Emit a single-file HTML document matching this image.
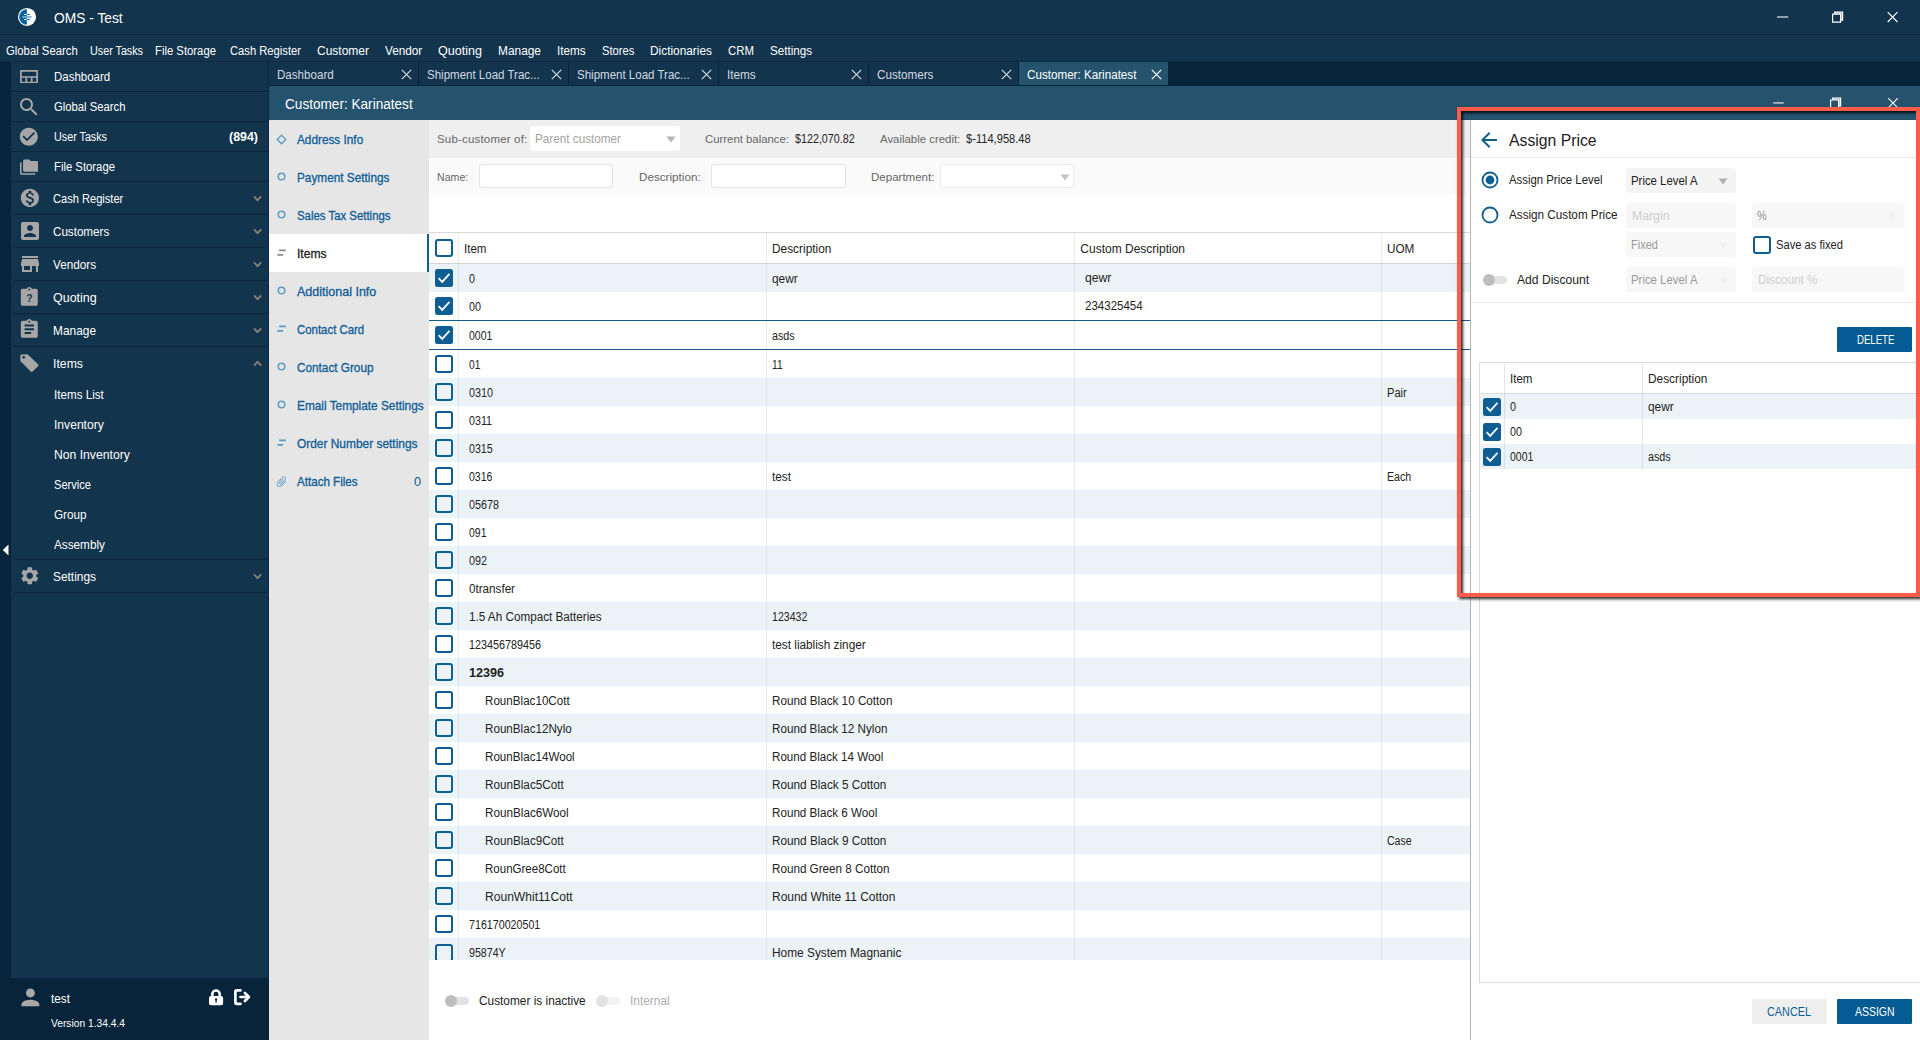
<!DOCTYPE html><html><head><meta charset="utf-8"><title>OMS - Test</title><style>html,body{margin:0;padding:0;background:#fff}
body{width:1920px;height:1040px;position:relative;overflow:hidden;font-family:'Liberation Sans',sans-serif}
.b{position:absolute;display:block}
.t{position:absolute;white-space:pre;line-height:20px;height:20px;transform-origin:0 50%}</style></head><body>
<div class="b" style="left:0px;top:0px;width:1920px;height:35px;background:#12344d;"></div>
<div class="b" style="left:0px;top:34px;width:1920px;height:1px;background:#0d2b43;"></div>
<div class="b" style="left:0px;top:35px;width:1920px;height:27px;background:#12344d;"></div>
<div class="b" style="left:0px;top:62px;width:11px;height:978px;background:#08243a;"></div>
<div class="b" style="left:11px;top:62px;width:257px;height:916px;background:#12344d;"></div>
<div class="b" style="left:0px;top:61px;width:1920px;height:1px;background:#0b2941;"></div>
<div class="b" style="left:268px;top:62px;width:1px;height:916px;background:#0b2941;"></div>
<div class="b" style="left:0px;top:978px;width:269px;height:62px;background:#08243a;"></div>
<div class="b" style="left:269px;top:62px;width:1651px;height:24px;background:#08243a;"></div>
<div class="b" style="left:269px;top:86px;width:1651px;height:34px;background:#25536e;"></div>
<div class="b" style="left:269px;top:120px;width:160px;height:920px;background:#e6e6e6;"></div>
<div class="b" style="left:429px;top:120px;width:1041px;height:920px;background:#fff;"></div>
<svg class="b" style="left:17px;top:7px" width="20" height="20" viewBox="0 0 20 20"><circle cx="10" cy="9.95" r="9.05" fill="#fff"/><path d="M9.9 2.2a7.75 7.75 0 0 0 0 15.5z" fill="#06639f"/><path d="M7 7.45h2.9M7 12.5h2.9" stroke="#fff" stroke-width="1.15"/><path d="M9.9 7.45h3M9.9 12.5h3" stroke="#0868a6" stroke-width="1.15"/><path d="M5.3 10h4.6" stroke="#a9c9e0" stroke-width="1.3"/><path d="M9.9 10h4.6" stroke="#4c8dbc" stroke-width="1.3"/></svg>
<span class="t" style="left:54.3px;top:8.0px;font-size:14.2px;color:#fff;transform:scaleX(0.9719);">OMS - Test</span>
<svg class="b" style="left:1770px;top:5px" width="140" height="26" viewBox="0 0 140 26"><path d="M7 12h11.2" stroke="#a7b2bd" stroke-width="1.7" fill="none"/><path d="M64.6 8.6V7.2h8v8h-1.6" fill="#9aa7b3" stroke="#fff" stroke-width="1.2"/><path d="M62.6 9.2h8v8h-8z" fill="#12344d" stroke="#fff" stroke-width="1.2"/><path d="M117.7 7.2l9.8 9.8M127.5 7.2l-9.8 9.8" stroke="#fff" stroke-width="1.1" fill="none"/></svg>
<span class="t" style="left:6px;top:40.5px;font-size:12.3px;color:#fff;transform:scaleX(0.9200);">Global Search</span>
<span class="t" style="left:90px;top:40.5px;font-size:12.3px;color:#fff;transform:scaleX(0.8747);">User Tasks</span>
<span class="t" style="left:155px;top:40.5px;font-size:12.3px;color:#fff;transform:scaleX(0.9199);">File Storage</span>
<span class="t" style="left:230px;top:40.5px;font-size:12.3px;color:#fff;transform:scaleX(0.9112);">Cash Register</span>
<span class="t" style="left:317px;top:40.5px;font-size:12.3px;color:#fff;transform:scaleX(0.9754);">Customer</span>
<span class="t" style="left:384.7px;top:40.5px;font-size:12.3px;color:#fff;transform:scaleX(0.9568);">Vendor</span>
<span class="t" style="left:437.7px;top:40.5px;font-size:12.3px;color:#fff;transform:scaleX(1.0214);">Quoting</span>
<span class="t" style="left:498px;top:40.5px;font-size:12.3px;color:#fff;transform:scaleX(0.9673);">Manage</span>
<span class="t" style="left:557px;top:40.5px;font-size:12.3px;color:#fff;transform:scaleX(0.9542);">Items</span>
<span class="t" style="left:601.7px;top:40.5px;font-size:12.3px;color:#fff;transform:scaleX(0.9087);">Stores</span>
<span class="t" style="left:650px;top:40.5px;font-size:12.3px;color:#fff;transform:scaleX(0.9650);">Dictionaries</span>
<span class="t" style="left:728px;top:40.5px;font-size:12.3px;color:#fff;transform:scaleX(0.9281);">CRM</span>
<span class="t" style="left:770px;top:40.5px;font-size:12.3px;color:#fff;transform:scaleX(0.9451);">Settings</span>
<div class="b" style="left:11px;top:90.8px;width:257px;height:1.4px;background:#0b2840;"></div>
<div class="b" style="left:11px;top:120.8px;width:257px;height:1.4px;background:#0b2840;"></div>
<div class="b" style="left:11px;top:150.8px;width:257px;height:1.4px;background:#0b2840;"></div>
<div class="b" style="left:11px;top:180.8px;width:257px;height:1.4px;background:#0b2840;"></div>
<div class="b" style="left:11.5px;top:209px;width:256.5px;height:6.3px;background:transparent;border-bottom:1.4px solid #0b2840;border-radius:0 0 4px 4px;box-sizing:border-box"></div>
<div class="b" style="left:11.5px;top:242px;width:256.5px;height:6.3px;background:transparent;border-bottom:1.4px solid #0b2840;border-radius:0 0 4px 4px;box-sizing:border-box"></div>
<div class="b" style="left:11.5px;top:275px;width:256.5px;height:6.3px;background:transparent;border-bottom:1.4px solid #0b2840;border-radius:0 0 4px 4px;box-sizing:border-box"></div>
<div class="b" style="left:11.5px;top:308px;width:256.5px;height:6.3px;background:transparent;border-bottom:1.4px solid #0b2840;border-radius:0 0 4px 4px;box-sizing:border-box"></div>
<div class="b" style="left:11.5px;top:341px;width:256.5px;height:6.3px;background:transparent;border-bottom:1.4px solid #0b2840;border-radius:0 0 4px 4px;box-sizing:border-box"></div>
<div class="b" style="left:11.5px;top:554px;width:256.5px;height:6.3px;background:transparent;border-bottom:1.4px solid #0b2840;border-radius:0 0 4px 4px;box-sizing:border-box"></div>
<div class="b" style="left:11.5px;top:587px;width:256.5px;height:6.3px;background:transparent;border-bottom:1.4px solid #0b2840;border-radius:0 0 4px 4px;box-sizing:border-box"></div>
<svg class="b" style="left:19.6px;top:69.8px" width="18" height="13.4" viewBox="0 0 18 13.4"><path d="M0.9 0.9h16.2v11.6H0.9zM0.9 7h16.2M6.3 7v5.5M11.7 7v5.5" fill="none" stroke="#a6a6a6" stroke-width="1.7"/></svg>
<span class="t" style="left:54.3px;top:66.5px;font-size:12.3px;color:#fff;transform:scaleX(0.9340);">Dashboard</span>
<svg class="b" style="left:17px;top:94.5px;" width="24" height="24" viewBox="0 0 24 24"><path d="M15.5 14h-.79l-.28-.27C15.41 12.59 16 11.11 16 9.5 16 5.91 13.09 3 9.5 3S3 5.91 3 9.5 5.91 16 9.5 16c1.61 0 3.09-.59 4.23-1.57l.27.28v.79l5 4.99L20.49 19l-4.99-5zm-6 0C7.01 14 5 11.99 5 9.5S7.01 5 9.5 5 14 7.01 14 9.5 11.99 14 9.5 14z" fill="#a6a6a6"/></svg>
<span class="t" style="left:54.3px;top:96.5px;font-size:12.3px;color:#fff;transform:scaleX(0.9174);">Global Search</span>
<svg class="b" style="left:17.9px;top:125.7px;" width="21.6" height="21.6" viewBox="0 0 24 24"><path d="M12 2C6.48 2 2 6.48 2 12s4.48 10 10 10 10-4.48 10-10S17.52 2 12 2zm-2 15l-5-5 1.41-1.41L10 14.17l7.59-7.59L19 8l-9 9z" fill="#a6a6a6"/></svg>
<span class="t" style="left:54.3px;top:126.5px;font-size:12.3px;color:#fff;transform:scaleX(0.8747);">User Tasks</span>
<span class="t" style="left:228.7px;top:126.5px;font-size:12.3px;color:#fff;font-weight:700;transform:scaleX(1.0098);">(894)</span>
<svg class="b" style="left:19.5px;top:158px;" width="18.4" height="18.4" viewBox="0 0 24 24"><path d="M2 6H0v5h.01L0 20c0 1.1.9 2 2 2h18v-2H2V6zm20-2h-8l-2-2H6c-1.1 0-1.99.9-1.99 2L4 16c0 1.1.9 2 2 2h16c1.1 0 2-.9 2-2V6c0-1.1-.9-2-2-2z" fill="#a6a6a6"/></svg>
<span class="t" style="left:54.3px;top:156.5px;font-size:12.3px;color:#fff;transform:scaleX(0.9199);">File Storage</span>
<svg class="b" style="left:18.6px;top:187.1px;" width="21.8" height="21.8" viewBox="0 0 24 24"><path d="M12 2C6.48 2 2 6.48 2 12s4.48 10 10 10 10-4.48 10-10S17.52 2 12 2zm1.41 16.09V20h-2.67v-1.93c-1.71-.36-3.16-1.46-3.27-3.4h1.96c.1 1.05.82 1.87 2.65 1.87 1.96 0 2.4-.98 2.4-1.59 0-.83-.44-1.61-2.67-2.14-2.48-.6-4.18-1.62-4.18-3.67 0-1.72 1.39-2.84 3.11-3.21V4h2.67v1.95c1.86.45 2.79 1.86 2.85 3.39H14.3c-.05-1.11-.64-1.87-2.22-1.87-1.5 0-2.4.68-2.4 1.64 0 .84.65 1.39 2.67 1.91s4.18 1.39 4.18 3.91c-.01 1.83-1.38 2.83-3.12 3.16z" fill="#a6a6a6"/></svg>
<span class="t" style="left:52.9px;top:188.5px;font-size:13px;color:#fff;transform:scaleX(0.8534);">Cash Register</span>
<svg class="b" style="left:253px;top:195.0px" width="9.2" height="7" viewBox="0 0 9.2 7"><path d="M1 1.4l3.6 3.7 3.6-3.7" fill="none" stroke="#85827c" stroke-width="1.9"/></svg>
<svg class="b" style="left:17.5px;top:219.0px;" width="24" height="24" viewBox="0 0 24 24"><path d="M3 5v14c0 1.1.89 2 2 2h14c1.1 0 2-.9 2-2V5c0-1.1-.9-2-2-2H5c-1.11 0-2 .9-2 2zm12 4c0 1.66-1.34 3-3 3s-3-1.34-3-3 1.34-3 3-3 3 1.34 3 3zm-9 8c0-2 4-3.1 6-3.1s6 1.1 6 3.1v1H6v-1z" fill="#a6a6a6"/></svg>
<span class="t" style="left:52.9px;top:221.5px;font-size:13px;color:#fff;transform:scaleX(0.8941);">Customers</span>
<svg class="b" style="left:253px;top:228.0px" width="9.2" height="7" viewBox="0 0 9.2 7"><path d="M1 1.4l3.6 3.7 3.6-3.7" fill="none" stroke="#85827c" stroke-width="1.9"/></svg>
<svg class="b" style="left:17.5px;top:252.0px;" width="24" height="24" viewBox="0 0 24 24"><path d="M20 4H4v2h16V4zm1 10v-2l-1-5H4l-1 5v2h1v6h10v-6h4v6h2v-6h1zm-9 4H6v-4h6v4z" fill="#a6a6a6"/></svg>
<span class="t" style="left:52.9px;top:254.5px;font-size:13px;color:#fff;transform:scaleX(0.9014);">Vendors</span>
<svg class="b" style="left:253px;top:261.0px" width="9.2" height="7" viewBox="0 0 9.2 7"><path d="M1 1.4l3.6 3.7 3.6-3.7" fill="none" stroke="#85827c" stroke-width="1.9"/></svg>
<svg class="b" style="left:18.2px;top:285.7px;" width="22.6" height="22.6" viewBox="0 0 24 24"><path d="M19 3h-4.18C14.4 1.84 13.3 1 12 1c-1.3 0-2.4.84-2.82 2H5c-1.1 0-2 .9-2 2v14c0 1.1.9 2 2 2h14c1.1 0 2-.9 2-2V5c0-1.1-.9-2-2-2zm-7 0c.55 0 1 .45 1 1s-.45 1-1 1-1-.45-1-1 .45-1 1-1z" fill="#a6a6a6"/><text x="12" y="17.5" text-anchor="middle" font-family="Liberation Sans, sans-serif" font-weight="700" font-size="11" fill="#12344d">?</text></svg>
<span class="t" style="left:52.9px;top:287.5px;font-size:13px;color:#fff;transform:scaleX(0.9595);">Quoting</span>
<svg class="b" style="left:253px;top:294.0px" width="9.2" height="7" viewBox="0 0 9.2 7"><path d="M1 1.4l3.6 3.7 3.6-3.7" fill="none" stroke="#85827c" stroke-width="1.9"/></svg>
<svg class="b" style="left:18.2px;top:318.09999999999997px;" width="22.6" height="22.6" viewBox="0 0 24 24"><path d="M19 3h-4.18C14.4 1.84 13.3 1 12 1c-1.3 0-2.4.84-2.82 2H5c-1.1 0-2 .9-2 2v14c0 1.1.9 2 2 2h14c1.1 0 2-.9 2-2V5c0-1.1-.9-2-2-2zm-7 0c.55 0 1 .45 1 1s-.45 1-1 1-1-.45-1-1 .45-1 1-1zm2 14H7v-2h7v2zm3-4H7v-2h10v2zm0-4H7V7h10v2z" fill="#a6a6a6"/></svg>
<span class="t" style="left:52.9px;top:320.5px;font-size:13px;color:#fff;transform:scaleX(0.9152);">Manage</span>
<svg class="b" style="left:253px;top:327.0px" width="9.2" height="7" viewBox="0 0 9.2 7"><path d="M1 1.4l3.6 3.7 3.6-3.7" fill="none" stroke="#85827c" stroke-width="1.9"/></svg>
<svg class="b" style="left:18px;top:352px" width="22" height="22" viewBox="0 0 22 22"><path d="M3.75 3.85L8.9 3.6 19.1 13.35 13.65 18.6 3.6 8.2z" fill="#a6a6a6" stroke="#a6a6a6" stroke-width="2.7" stroke-linejoin="round"/><circle cx="5.65" cy="5.3" r="1.3" fill="#12344d"/></svg>
<span class="t" style="left:52.9px;top:353.5px;font-size:13px;color:#fff;transform:scaleX(0.9435);">Items</span>
<svg class="b" style="left:253px;top:359.5px" width="9.2" height="7" viewBox="0 0 9.2 7"><path d="M1 5.6l3.6-3.7 3.6 3.7" fill="none" stroke="#85827c" stroke-width="1.9"/></svg>
<span class="t" style="left:54px;top:384.8px;font-size:12.3px;color:#fff;transform:scaleX(0.9463);">Items List</span>
<span class="t" style="left:54px;top:414.8px;font-size:12.3px;color:#fff;transform:scaleX(0.9843);">Inventory</span>
<span class="t" style="left:54px;top:444.8px;font-size:12.3px;color:#fff;transform:scaleX(0.9900);">Non Inventory</span>
<span class="t" style="left:54px;top:474.8px;font-size:12.3px;color:#fff;transform:scaleX(0.9021);">Service</span>
<span class="t" style="left:54px;top:504.79999999999995px;font-size:12.3px;color:#fff;transform:scaleX(0.9506);">Group</span>
<span class="t" style="left:54px;top:534.8px;font-size:12.3px;color:#fff;transform:scaleX(0.9547);">Assembly</span>
<svg class="b" style="left:18.7px;top:565.25px;" width="21.5" height="21.5" viewBox="0 0 24 24"><path d="M19.14 12.94c.04-.3.06-.61.06-.94 0-.32-.02-.64-.07-.94l2.03-1.58c.18-.14.23-.41.12-.61l-1.92-3.32c-.12-.22-.37-.29-.59-.22l-2.39.96c-.5-.38-1.03-.7-1.62-.94l-.36-2.54c-.04-.24-.24-.41-.48-.41h-3.84c-.24 0-.43.17-.47.41l-.36 2.54c-.59.24-1.13.57-1.62.94l-2.39-.96c-.22-.08-.47 0-.59.22L2.74 8.87c-.12.21-.08.47.12.61l2.03 1.58c-.05.3-.09.63-.09.94s.02.64.07.94l-2.03 1.58c-.18.14-.23.41-.12.61l1.92 3.32c.12.22.37.29.59.22l2.39-.96c.5.38 1.03.7 1.62.94l.36 2.54c.05.24.24.41.48.41h3.84c.24 0 .44-.17.47-.41l.36-2.54c.59-.24 1.13-.56 1.62-.94l2.39.96c.22.08.47 0 .59-.22l1.92-3.32c.12-.22.07-.47-.12-.61l-2.01-1.58zM12 15.6c-1.98 0-3.6-1.62-3.6-3.6s1.62-3.6 3.6-3.6 3.6 1.62 3.6 3.6-1.62 3.6-3.6 3.6z" fill="#a6a6a6"/></svg>
<span class="t" style="left:52.9px;top:566.5px;font-size:13px;color:#fff;transform:scaleX(0.9152);">Settings</span>
<svg class="b" style="left:253px;top:573.0px" width="9.2" height="7" viewBox="0 0 9.2 7"><path d="M1 1.4l3.6 3.7 3.6-3.7" fill="none" stroke="#85827c" stroke-width="1.9"/></svg>
<svg class="b" style="left:2px;top:544px" width="7" height="12" viewBox="0 0 7 12"><path d="M6.5 0.5v11L0.8 6z" fill="#fff"/></svg>
<svg class="b" style="left:16.7px;top:984.1px;" width="26.8" height="26.8" viewBox="0 0 24 24"><path d="M12 12c2.21 0 4-1.79 4-4s-1.79-4-4-4-4 1.79-4 4 1.79 4 4 4zm0 2c-2.67 0-8 1.34-8 4v2h16v-2c0-2.66-5.33-4-8-4z" fill="#a9a9a9"/></svg>
<span class="t" style="left:51px;top:988.5px;font-size:12.3px;color:#fff;transform:scaleX(0.9582);">test</span>
<svg class="b" style="left:206px;top:986px" width="20" height="22" viewBox="0 0 20 22"><rect x="3" y="10" width="14.1" height="9.2" rx="1.9" fill="#fff"/><path d="M6.3 10.5V8.2a3.7 3.7 0 0 1 7.4 0V10.5" fill="none" stroke="#fff" stroke-width="2.6"/><circle cx="10.05" cy="13.5" r="1.15" fill="#08243a"/><path d="M10.05 13.5v3.3" stroke="#08243a" stroke-width="1.2"/></svg>
<svg class="b" style="left:232px;top:987px" width="20" height="20" viewBox="0 0 20 20"><g fill="none" stroke="#fff" stroke-linecap="round" stroke-linejoin="round"><path d="M8.5 3.4H4.6a1.2 1.2 0 0 0-1.2 1.2V15.6a1.2 1.2 0 0 0 1.2 1.2H8.5" stroke-width="2.7"/><path d="M8.4 10H16.4" stroke-width="2.5"/><path d="M12.9 6L16.9 10 12.9 14" stroke-width="2.7"/></g></svg>
<span class="t" style="left:51px;top:1013.3px;font-size:11px;color:#fff;transform:scaleX(0.9306);">Version 1.34.4.4</span>
<div class="b" style="left:269px;top:62px;width:149px;height:23px;background:#12344d;"></div>
<span class="t" style="left:277.3px;top:64.5px;font-size:12.3px;color:#d3dbe2;transform:scaleX(0.9423);">Dashboard</span>
<svg class="b" style="left:400.5px;top:68.6px" width="11" height="11" viewBox="0 0 11 11"><path d="M0.8 0.8l9.4 9.4M10.2 0.8l-9.4 9.4" stroke="#d3dbe2" stroke-width="1.2"/></svg>
<div class="b" style="left:419px;top:62px;width:149px;height:23px;background:#12344d;"></div>
<span class="t" style="left:427.3px;top:64.5px;font-size:12.3px;color:#d3dbe2;transform:scaleX(0.9367);">Shipment Load Trac...</span>
<svg class="b" style="left:550.5px;top:68.6px" width="11" height="11" viewBox="0 0 11 11"><path d="M0.8 0.8l9.4 9.4M10.2 0.8l-9.4 9.4" stroke="#d3dbe2" stroke-width="1.2"/></svg>
<div class="b" style="left:569px;top:62px;width:149px;height:23px;background:#12344d;"></div>
<span class="t" style="left:577.3px;top:64.5px;font-size:12.3px;color:#d3dbe2;transform:scaleX(0.9367);">Shipment Load Trac...</span>
<svg class="b" style="left:700.5px;top:68.6px" width="11" height="11" viewBox="0 0 11 11"><path d="M0.8 0.8l9.4 9.4M10.2 0.8l-9.4 9.4" stroke="#d3dbe2" stroke-width="1.2"/></svg>
<div class="b" style="left:719px;top:62px;width:149px;height:23px;background:#12344d;"></div>
<span class="t" style="left:727.3px;top:64.5px;font-size:12.3px;color:#d3dbe2;transform:scaleX(0.9542);">Items</span>
<svg class="b" style="left:850.5px;top:68.6px" width="11" height="11" viewBox="0 0 11 11"><path d="M0.8 0.8l9.4 9.4M10.2 0.8l-9.4 9.4" stroke="#d3dbe2" stroke-width="1.2"/></svg>
<div class="b" style="left:869px;top:62px;width:149px;height:23px;background:#12344d;"></div>
<span class="t" style="left:877.3px;top:64.5px;font-size:12.3px;color:#d3dbe2;transform:scaleX(0.9486);">Customers</span>
<svg class="b" style="left:1000.5px;top:68.6px" width="11" height="11" viewBox="0 0 11 11"><path d="M0.8 0.8l9.4 9.4M10.2 0.8l-9.4 9.4" stroke="#d3dbe2" stroke-width="1.2"/></svg>
<div class="b" style="left:1019px;top:62px;width:149px;height:23px;background:#25536e;"></div>
<span class="t" style="left:1027.3px;top:64.5px;font-size:12.3px;color:#fff;transform:scaleX(0.9472);">Customer: Karinatest</span>
<svg class="b" style="left:1150.5px;top:68.6px" width="11" height="11" viewBox="0 0 11 11"><path d="M0.8 0.8l9.4 9.4M10.2 0.8l-9.4 9.4" stroke="#fff" stroke-width="1.2"/></svg>
<span class="t" style="left:285px;top:94.0px;font-size:14px;color:#fff;transform:scaleX(0.9711);">Customer: Karinatest</span>
<svg class="b" style="left:1765px;top:92px" width="140" height="26" viewBox="0 0 140 26"><path d="M8.3 10.9h10.5" stroke="#afbcc7" stroke-width="1.7" fill="none"/><path d="M67.6 7.4V6h8v8h-1.6" fill="#a9b7c2" stroke="#fff" stroke-width="1.2"/><path d="M65.6 8h8v8h-8z" fill="#25536e" stroke="#fff" stroke-width="1.2"/><path d="M123.2 6.2l9.6 9.6M132.8 6.2l-9.6 9.6" stroke="#fff" stroke-width="1.1" fill="none"/></svg>
<div class="b" style="left:269px;top:234px;width:158px;height:38px;background:#fff;"></div>
<div class="b" style="left:427px;top:234px;width:2px;height:38px;background:#0f5e93;"></div>
<span class="t" style="left:297.3px;top:129.5px;font-size:12.6px;color:#0d5c97;transform:scaleX(0.9361);-webkit-text-stroke:0.3px #0d5c97;">Address Info</span>
<svg class="b" style="left:276px;top:133.5px" width="11" height="11" viewBox="0 0 11 11"><path d="M5.5 1.2L9.8 5.5 5.5 9.8 1.2 5.5z" fill="none" stroke="#5d9cc2" stroke-width="1.3"/></svg>
<span class="t" style="left:297.3px;top:167.5px;font-size:12.6px;color:#0d5c97;transform:scaleX(0.9361);-webkit-text-stroke:0.3px #0d5c97;">Payment Settings</span>
<svg class="b" style="left:276px;top:170.9px" width="11" height="11" viewBox="0 0 11 11"><circle cx="5.5" cy="5.5" r="3.3" fill="none" stroke="#5d9cc2" stroke-width="1.5"/></svg>
<span class="t" style="left:297.3px;top:205.5px;font-size:12.6px;color:#0d5c97;transform:scaleX(0.9045);-webkit-text-stroke:0.3px #0d5c97;">Sales Tax Settings</span>
<svg class="b" style="left:276px;top:208.9px" width="11" height="11" viewBox="0 0 11 11"><circle cx="5.5" cy="5.5" r="3.3" fill="none" stroke="#5d9cc2" stroke-width="1.5"/></svg>
<span class="t" style="left:297.3px;top:243.5px;font-size:12.6px;color:#222;transform:scaleX(0.9611);-webkit-text-stroke:0.3px #222;">Items</span>
<svg class="b" style="left:276px;top:246.5px" width="11" height="11" viewBox="0 0 11 11"><path d="M3.2 3.4h6.6M1.4 7.9h5.6" stroke="#8a8a8a" stroke-width="1.7"/></svg>
<span class="t" style="left:297.3px;top:281.5px;font-size:12.6px;color:#0d5c97;transform:scaleX(0.9934);-webkit-text-stroke:0.3px #0d5c97;">Additional Info</span>
<svg class="b" style="left:276px;top:284.9px" width="11" height="11" viewBox="0 0 11 11"><circle cx="5.5" cy="5.5" r="3.3" fill="none" stroke="#5d9cc2" stroke-width="1.5"/></svg>
<span class="t" style="left:297.3px;top:319.5px;font-size:12.6px;color:#0d5c97;transform:scaleX(0.9056);-webkit-text-stroke:0.3px #0d5c97;">Contact Card</span>
<svg class="b" style="left:276px;top:322.5px" width="11" height="11" viewBox="0 0 11 11"><path d="M3.2 3.4h6.6M1.4 7.9h5.6" stroke="#5d9cc2" stroke-width="1.7"/></svg>
<span class="t" style="left:297.3px;top:357.5px;font-size:12.6px;color:#0d5c97;transform:scaleX(0.9340);-webkit-text-stroke:0.3px #0d5c97;">Contact Group</span>
<svg class="b" style="left:276px;top:360.9px" width="11" height="11" viewBox="0 0 11 11"><circle cx="5.5" cy="5.5" r="3.3" fill="none" stroke="#5d9cc2" stroke-width="1.5"/></svg>
<span class="t" style="left:297.3px;top:395.5px;font-size:12.6px;color:#0d5c97;transform:scaleX(0.9394);-webkit-text-stroke:0.3px #0d5c97;">Email Template Settings</span>
<svg class="b" style="left:276px;top:398.9px" width="11" height="11" viewBox="0 0 11 11"><circle cx="5.5" cy="5.5" r="3.3" fill="none" stroke="#5d9cc2" stroke-width="1.5"/></svg>
<span class="t" style="left:297.3px;top:433.5px;font-size:12.6px;color:#0d5c97;transform:scaleX(0.9459);-webkit-text-stroke:0.3px #0d5c97;">Order Number settings</span>
<svg class="b" style="left:276px;top:436.5px" width="11" height="11" viewBox="0 0 11 11"><path d="M3.2 3.4h6.6M1.4 7.9h5.6" stroke="#5d9cc2" stroke-width="1.7"/></svg>
<span class="t" style="left:297.3px;top:471.5px;font-size:12.6px;color:#0d5c97;transform:scaleX(0.9210);-webkit-text-stroke:0.3px #0d5c97;">Attach Files</span>
<svg class="b" style="left:275px;top:474.5px;transform:rotate(45deg);" width="13" height="13" viewBox="0 0 24 24"><path d="M16.5 6v11.5c0 2.21-1.79 4-4 4s-4-1.79-4-4V5c0-1.38 1.12-2.5 2.5-2.5s2.5 1.12 2.5 2.5v10.5c0 .55-.45 1-1 1s-1-.45-1-1V6H10v9.5c0 1.38 1.12 2.5 2.5 2.5s2.5-1.12 2.5-2.5V5c0-2.21-1.79-4-4-4S7 2.79 7 5v12.5c0 3.04 2.46 5.5 5.5 5.5s5.5-2.46 5.5-5.5V6h-1.5z" fill="#5d9cc2"/></svg>
<span class="t" style="left:414px;top:471.5px;font-size:12.6px;color:#0d5c97;">0</span>
<div class="b" style="left:429px;top:120px;width:1041px;height:38px;background:#efefef;"></div>
<div class="b" style="left:429px;top:158px;width:1041px;height:37px;background:#fafafa;"></div>
<span class="t" style="left:437px;top:128.8px;font-size:11.6px;color:#666;transform:scaleX(0.9889);letter-spacing:0.2px;">Sub-customer of:</span>
<div class="b" style="left:530px;top:126px;width:150px;height:25px;background:#fff;border-radius:3px"></div>
<span class="t" style="left:535.3px;top:128.8px;font-size:12px;color:#a3a3a3;transform:scaleX(0.9768);">Parent customer</span>
<svg class="b" style="left:666px;top:136px" width="10" height="7" viewBox="0 0 10 7"><path d="M0.5 0.5h9L5 6.5z" fill="#b5b5b5"/></svg>
<span class="t" style="left:705.3px;top:128.8px;font-size:11.6px;color:#666;transform:scaleX(0.9799);">Current balance:</span>
<span class="t" style="left:795.3px;top:128.8px;font-size:12px;color:#222;transform:scaleX(0.8946);">$122,070.82</span>
<span class="t" style="left:880px;top:128.8px;font-size:11.6px;color:#666;transform:scaleX(0.9836);">Available credit:</span>
<span class="t" style="left:966.3px;top:128.8px;font-size:12px;color:#222;transform:scaleX(0.9264);">$-114,958.48</span>
<span class="t" style="left:437px;top:166.8px;font-size:11.6px;color:#666;transform:scaleX(0.9164);">Name:</span>
<div class="b" style="left:479px;top:164px;width:134px;height:24px;background:#fff;border:1px solid #e4e4e4;border-radius:3px;box-sizing:border-box"></div>
<span class="t" style="left:639px;top:166.8px;font-size:11.6px;color:#666;transform:scaleX(1.0079);">Description:</span>
<div class="b" style="left:711px;top:164px;width:135px;height:24px;background:#fff;border:1px solid #e4e4e4;border-radius:3px;box-sizing:border-box"></div>
<span class="t" style="left:871.3px;top:166.8px;font-size:11.6px;color:#666;transform:scaleX(0.9938);">Department:</span>
<div class="b" style="left:940px;top:164px;width:134px;height:24px;background:#fff;border:1px solid #ececec;border-radius:3px;box-sizing:border-box"></div>
<svg class="b" style="left:1060px;top:174px" width="10" height="7" viewBox="0 0 10 7"><path d="M0.5 0.5h9L5 6.5z" fill="#c4c4c4"/></svg>
<div class="b" style="left:429px;top:232px;width:1041px;height:1px;background:#d9d9d9;"></div>
<div class="b" style="left:429px;top:263px;width:1041px;height:1px;background:#d4d4d4;"></div>
<div class="b" style="left:429px;top:264px;width:1041px;height:28px;background:#ecf3f7;"></div>
<div class="b" style="left:429px;top:378px;width:1041px;height:28px;background:#ecf3f7;"></div>
<div class="b" style="left:429px;top:434px;width:1041px;height:28px;background:#ecf3f7;"></div>
<div class="b" style="left:429px;top:490px;width:1041px;height:28px;background:#ecf3f7;"></div>
<div class="b" style="left:429px;top:546px;width:1041px;height:28px;background:#ecf3f7;"></div>
<div class="b" style="left:429px;top:602px;width:1041px;height:28px;background:#ecf3f7;"></div>
<div class="b" style="left:429px;top:658px;width:1041px;height:28px;background:#ecf3f7;"></div>
<div class="b" style="left:429px;top:714px;width:1041px;height:28px;background:#ecf3f7;"></div>
<div class="b" style="left:429px;top:770px;width:1041px;height:28px;background:#ecf3f7;"></div>
<div class="b" style="left:429px;top:826px;width:1041px;height:28px;background:#ecf3f7;"></div>
<div class="b" style="left:429px;top:882px;width:1041px;height:28px;background:#ecf3f7;"></div>
<div class="b" style="left:429px;top:938px;width:1041px;height:22px;background:#ecf3f7;"></div>
<div class="b" style="left:458px;top:233px;width:1px;height:727px;background:rgba(120,140,160,0.16);"></div>
<div class="b" style="left:766px;top:233px;width:1px;height:727px;background:rgba(120,140,160,0.16);"></div>
<div class="b" style="left:1074px;top:233px;width:1px;height:727px;background:rgba(120,140,160,0.16);"></div>
<div class="b" style="left:1381px;top:233px;width:1px;height:727px;background:rgba(120,140,160,0.16);"></div>
<div class="b" style="left:429px;top:320px;width:1041px;height:1.3px;background:#0f5e93;"></div>
<div class="b" style="left:429px;top:348.9px;width:1041px;height:1.3px;background:#0f5e93;"></div>
<svg class="b" style="left:435px;top:239px" width="18" height="18" viewBox="0 0 18 18"><rect x="1" y="1" width="16" height="16" rx="2" fill="none" stroke="#0f5e93" stroke-width="2"/></svg>
<span class="t" style="left:464px;top:239.0px;font-size:12px;color:#222;transform:scaleX(0.9600);">Item</span>
<span class="t" style="left:772.3px;top:239.0px;font-size:12px;color:#222;transform:scaleX(0.9895);">Description</span>
<span class="t" style="left:1080.3px;top:239.0px;font-size:12px;color:#222;">Custom Description</span>
<span class="t" style="left:1387.3px;top:239.0px;font-size:12px;color:#222;transform:scaleX(0.9786);">UOM</span>
<svg class="b" style="left:435px;top:269.0px" width="18" height="18" viewBox="0 0 18 18"><rect x="0" y="0" width="18" height="18" rx="2.5" fill="#0f5e93"/><path d="M3.6 9.2l3.6 3.7 7.3-8" fill="none" stroke="#fff" stroke-width="1.7"/></svg>
<span class="t" style="left:469px;top:268.5px;font-size:12px;color:#222;transform:scaleX(0.8972);">0</span>
<span class="t" style="left:772.3px;top:268.5px;font-size:12px;color:#222;transform:scaleX(0.9879);">qewr</span>
<span class="t" style="left:1084.6px;top:268.0px;font-size:12px;color:#222;transform:scaleX(1.0148);">qewr</span>
<svg class="b" style="left:435px;top:297.0px" width="18" height="18" viewBox="0 0 18 18"><rect x="0" y="0" width="18" height="18" rx="2.5" fill="#0f5e93"/><path d="M3.6 9.2l3.6 3.7 7.3-8" fill="none" stroke="#fff" stroke-width="1.7"/></svg>
<span class="t" style="left:469px;top:296.5px;font-size:12px;color:#222;transform:scaleX(0.8982);">00</span>
<span class="t" style="left:1084.6px;top:296.0px;font-size:12px;color:#222;transform:scaleX(0.9604);">234325454</span>
<svg class="b" style="left:435px;top:326.0px" width="18" height="18" viewBox="0 0 18 18"><rect x="0" y="0" width="18" height="18" rx="2.5" fill="#0f5e93"/><path d="M3.6 9.2l3.6 3.7 7.3-8" fill="none" stroke="#fff" stroke-width="1.7"/></svg>
<span class="t" style="left:469px;top:325.5px;font-size:12px;color:#222;transform:scaleX(0.8726);">0001</span>
<span class="t" style="left:772.3px;top:325.5px;font-size:12px;color:#222;transform:scaleX(0.8951);">asds</span>
<svg class="b" style="left:435px;top:355.0px" width="18" height="18" viewBox="0 0 18 18"><rect x="1" y="1" width="16" height="16" rx="2" fill="none" stroke="#0f5e93" stroke-width="2"/></svg>
<span class="t" style="left:469px;top:354.5px;font-size:12px;color:#222;transform:scaleX(0.8458);">01</span>
<span class="t" style="left:772.3px;top:354.5px;font-size:12px;color:#222;transform:scaleX(0.8501);">11</span>
<svg class="b" style="left:435px;top:383.0px" width="18" height="18" viewBox="0 0 18 18"><rect x="1" y="1" width="16" height="16" rx="2" fill="none" stroke="#0f5e93" stroke-width="2"/></svg>
<span class="t" style="left:469px;top:382.5px;font-size:12px;color:#222;transform:scaleX(0.8988);">0310</span>
<span class="t" style="left:1387.3px;top:382.5px;font-size:12px;color:#222;transform:scaleX(0.9230);">Pair</span>
<svg class="b" style="left:435px;top:411.0px" width="18" height="18" viewBox="0 0 18 18"><rect x="1" y="1" width="16" height="16" rx="2" fill="none" stroke="#0f5e93" stroke-width="2"/></svg>
<span class="t" style="left:469px;top:410.5px;font-size:12px;color:#222;transform:scaleX(0.8910);">0311</span>
<svg class="b" style="left:435px;top:439.0px" width="18" height="18" viewBox="0 0 18 18"><rect x="1" y="1" width="16" height="16" rx="2" fill="none" stroke="#0f5e93" stroke-width="2"/></svg>
<span class="t" style="left:469px;top:438.5px;font-size:12px;color:#222;transform:scaleX(0.8875);">0315</span>
<svg class="b" style="left:435px;top:467.0px" width="18" height="18" viewBox="0 0 18 18"><rect x="1" y="1" width="16" height="16" rx="2" fill="none" stroke="#0f5e93" stroke-width="2"/></svg>
<span class="t" style="left:469px;top:466.5px;font-size:12px;color:#222;transform:scaleX(0.8726);">0316</span>
<span class="t" style="left:772.3px;top:466.5px;font-size:12px;color:#222;transform:scaleX(0.9822);">test</span>
<span class="t" style="left:1387.3px;top:466.5px;font-size:12px;color:#222;transform:scaleX(0.8882);">Each</span>
<svg class="b" style="left:435px;top:495.0px" width="18" height="18" viewBox="0 0 18 18"><rect x="1" y="1" width="16" height="16" rx="2" fill="none" stroke="#0f5e93" stroke-width="2"/></svg>
<span class="t" style="left:469px;top:494.5px;font-size:12px;color:#222;transform:scaleX(0.8989);">05678</span>
<svg class="b" style="left:435px;top:523.0px" width="18" height="18" viewBox="0 0 18 18"><rect x="1" y="1" width="16" height="16" rx="2" fill="none" stroke="#0f5e93" stroke-width="2"/></svg>
<span class="t" style="left:469px;top:522.5px;font-size:12px;color:#222;transform:scaleX(0.8736);">091</span>
<svg class="b" style="left:435px;top:551.0px" width="18" height="18" viewBox="0 0 18 18"><rect x="1" y="1" width="16" height="16" rx="2" fill="none" stroke="#0f5e93" stroke-width="2"/></svg>
<span class="t" style="left:469px;top:550.5px;font-size:12px;color:#222;transform:scaleX(0.8986);">092</span>
<svg class="b" style="left:435px;top:579.0px" width="18" height="18" viewBox="0 0 18 18"><rect x="1" y="1" width="16" height="16" rx="2" fill="none" stroke="#0f5e93" stroke-width="2"/></svg>
<span class="t" style="left:469px;top:578.5px;font-size:12px;color:#222;transform:scaleX(0.9713);">0transfer</span>
<svg class="b" style="left:435px;top:607.0px" width="18" height="18" viewBox="0 0 18 18"><rect x="1" y="1" width="16" height="16" rx="2" fill="none" stroke="#0f5e93" stroke-width="2"/></svg>
<span class="t" style="left:469px;top:606.5px;font-size:12px;color:#222;transform:scaleX(0.9752);">1.5 Ah Compact Batteries</span>
<span class="t" style="left:772.3px;top:606.5px;font-size:12px;color:#222;transform:scaleX(0.8840);">123432</span>
<svg class="b" style="left:435px;top:635.0px" width="18" height="18" viewBox="0 0 18 18"><rect x="1" y="1" width="16" height="16" rx="2" fill="none" stroke="#0f5e93" stroke-width="2"/></svg>
<span class="t" style="left:469px;top:634.5px;font-size:12px;color:#222;transform:scaleX(0.8989);">123456789456</span>
<span class="t" style="left:772.3px;top:634.5px;font-size:12px;color:#222;transform:scaleX(0.9823);">test liablish zinger</span>
<svg class="b" style="left:435px;top:663.0px" width="18" height="18" viewBox="0 0 18 18"><rect x="1" y="1" width="16" height="16" rx="2" fill="none" stroke="#0f5e93" stroke-width="2"/></svg>
<span class="t" style="left:469px;top:662.5px;font-size:12px;color:#222;font-weight:700;transform:scaleX(1.0487);">12396</span>
<svg class="b" style="left:435px;top:691.0px" width="18" height="18" viewBox="0 0 18 18"><rect x="1" y="1" width="16" height="16" rx="2" fill="none" stroke="#0f5e93" stroke-width="2"/></svg>
<span class="t" style="left:485px;top:690.5px;font-size:12px;color:#222;transform:scaleX(0.9692);">RounBlac10Cott</span>
<span class="t" style="left:772.3px;top:690.5px;font-size:12px;color:#222;transform:scaleX(0.9755);">Round Black 10 Cotton</span>
<svg class="b" style="left:435px;top:719.0px" width="18" height="18" viewBox="0 0 18 18"><rect x="1" y="1" width="16" height="16" rx="2" fill="none" stroke="#0f5e93" stroke-width="2"/></svg>
<span class="t" style="left:485px;top:718.5px;font-size:12px;color:#222;transform:scaleX(0.9699);">RounBlac12Nylo</span>
<span class="t" style="left:772.3px;top:718.5px;font-size:12px;color:#222;transform:scaleX(0.9719);">Round Black 12 Nylon</span>
<svg class="b" style="left:435px;top:747.0px" width="18" height="18" viewBox="0 0 18 18"><rect x="1" y="1" width="16" height="16" rx="2" fill="none" stroke="#0f5e93" stroke-width="2"/></svg>
<span class="t" style="left:485px;top:746.5px;font-size:12px;color:#222;transform:scaleX(0.9696);">RounBlac14Wool</span>
<span class="t" style="left:772.3px;top:746.5px;font-size:12px;color:#222;transform:scaleX(0.9671);">Round Black 14 Wool</span>
<svg class="b" style="left:435px;top:775.0px" width="18" height="18" viewBox="0 0 18 18"><rect x="1" y="1" width="16" height="16" rx="2" fill="none" stroke="#0f5e93" stroke-width="2"/></svg>
<span class="t" style="left:485px;top:774.5px;font-size:12px;color:#222;transform:scaleX(0.9750);">RounBlac5Cott</span>
<span class="t" style="left:772.3px;top:774.5px;font-size:12px;color:#222;transform:scaleX(0.9799);">Round Black 5 Cotton</span>
<svg class="b" style="left:435px;top:803.0px" width="18" height="18" viewBox="0 0 18 18"><rect x="1" y="1" width="16" height="16" rx="2" fill="none" stroke="#0f5e93" stroke-width="2"/></svg>
<span class="t" style="left:485px;top:802.5px;font-size:12px;color:#222;transform:scaleX(0.9752);">RounBlac6Wool</span>
<span class="t" style="left:772.3px;top:802.5px;font-size:12px;color:#222;transform:scaleX(0.9713);">Round Black 6 Wool</span>
<svg class="b" style="left:435px;top:831.0px" width="18" height="18" viewBox="0 0 18 18"><rect x="1" y="1" width="16" height="16" rx="2" fill="none" stroke="#0f5e93" stroke-width="2"/></svg>
<span class="t" style="left:485px;top:830.5px;font-size:12px;color:#222;transform:scaleX(0.9750);">RounBlac9Cott</span>
<span class="t" style="left:772.3px;top:830.5px;font-size:12px;color:#222;transform:scaleX(0.9799);">Round Black 9 Cotton</span>
<span class="t" style="left:1387.3px;top:830.5px;font-size:12px;color:#222;transform:scaleX(0.8781);">Case</span>
<svg class="b" style="left:435px;top:859.0px" width="18" height="18" viewBox="0 0 18 18"><rect x="1" y="1" width="16" height="16" rx="2" fill="none" stroke="#0f5e93" stroke-width="2"/></svg>
<span class="t" style="left:485px;top:858.5px;font-size:12px;color:#222;transform:scaleX(0.9602);">RounGree8Cott</span>
<span class="t" style="left:772.3px;top:858.5px;font-size:12px;color:#222;transform:scaleX(0.9723);">Round Green 8 Cotton</span>
<svg class="b" style="left:435px;top:887.0px" width="18" height="18" viewBox="0 0 18 18"><rect x="1" y="1" width="16" height="16" rx="2" fill="none" stroke="#0f5e93" stroke-width="2"/></svg>
<span class="t" style="left:485px;top:886.5px;font-size:12px;color:#222;transform:scaleX(1.0062);">RounWhit11Cott</span>
<span class="t" style="left:772.3px;top:886.5px;font-size:12px;color:#222;transform:scaleX(0.9963);">Round White 11 Cotton</span>
<svg class="b" style="left:435px;top:915.0px" width="18" height="18" viewBox="0 0 18 18"><rect x="1" y="1" width="16" height="16" rx="2" fill="none" stroke="#0f5e93" stroke-width="2"/></svg>
<span class="t" style="left:469px;top:914.5px;font-size:12px;color:#222;transform:scaleX(0.8902);">716170020501</span>
<svg class="b" style="left:435px;top:944px" width="18" height="18" viewBox="0 0 18 18"><rect x="1" y="1" width="16" height="16" rx="2" fill="none" stroke="#0f5e93" stroke-width="2"/></svg>
<span class="t" style="left:469px;top:942.5px;font-size:12px;color:#222;transform:scaleX(0.8870);">95874Y</span>
<span class="t" style="left:772.3px;top:942.5px;font-size:12px;color:#222;transform:scaleX(0.9899);">Home System Magnanic</span>
<div class="b" style="left:429px;top:960px;width:1041px;height:80px;background:#fff;"></div>
<div class="b" style="left:449px;top:996.5px;width:20px;height:8px;background:#e3e3e3;border-radius:4px"></div>
<div class="b" style="left:445px;top:994.5px;width:12px;height:12px;background:#bdbdbd;border-radius:50%"></div>
<span class="t" style="left:479.3px;top:990.5px;font-size:12px;color:#222;transform:scaleX(0.9875);">Customer is inactive</span>
<div class="b" style="left:600px;top:996.5px;width:20px;height:8px;background:#f2f2f2;border-radius:4px"></div>
<div class="b" style="left:596px;top:994.5px;width:12px;height:12px;background:#e2e2e2;border-radius:50%"></div>
<span class="t" style="left:630px;top:990.5px;font-size:12px;color:#adadad;transform:scaleX(0.9917);">Internal</span>
<div class="b" style="left:1470px;top:120px;width:450px;height:920px;background:#fff;"></div>
<div class="b" style="left:1470px;top:120px;width:1px;height:920px;background:#b4b4b4;"></div>
<svg class="b" style="left:1477px;top:128.2px;" width="24" height="24" viewBox="0 0 24 24"><path d="M20 11H7.83l5.59-5.59L12 4l-8 8 8 8 1.41-1.41L7.83 13H20v-2z" fill="#0f5e93"/></svg>
<span class="t" style="left:1508.9px;top:131.3px;font-size:16px;color:#222;transform:scaleX(0.9851);">Assign Price</span>
<div class="b" style="left:1471px;top:157px;width:449px;height:1px;background:#e9e9e9;"></div>
<svg class="b" style="left:1480.9px;top:171.4px" width="18" height="18" viewBox="0 0 18 18"><circle cx="9" cy="9" r="7.5" fill="#fff" stroke="#0f5e93" stroke-width="1.8"/><circle cx="9" cy="9" r="4.4" fill="#0f5e93"/></svg>
<span class="t" style="left:1509.2px;top:170.0px;font-size:12px;color:#222;transform:scaleX(0.9471);">Assign Price Level</span>
<div class="b" style="left:1626px;top:168px;width:110px;height:24.5px;background:#f4f4f4;border-radius:3px"></div>
<span class="t" style="left:1631px;top:170.5px;font-size:12px;color:#222;transform:scaleX(0.9494);">Price Level A</span>
<svg class="b" style="left:1718px;top:178px" width="10" height="7" viewBox="0 0 10 7"><path d="M0.5 0.5h9L5 6.5z" fill="#b0b0b0"/></svg>
<svg class="b" style="left:1480.9px;top:206.4px" width="18" height="18" viewBox="0 0 18 18"><circle cx="9" cy="9" r="7.5" fill="#fff" stroke="#0f5e93" stroke-width="1.8"/></svg>
<span class="t" style="left:1509.2px;top:205.0px;font-size:12px;color:#222;transform:scaleX(0.9742);">Assign Custom Price</span>
<div class="b" style="left:1626px;top:203px;width:110px;height:24.5px;background:#f7f7f7;border-radius:3px"></div>
<span class="t" style="left:1632px;top:205.5px;font-size:12px;color:#cdcdcd;transform:scaleX(1.0221);">Margin</span>
<div class="b" style="left:1752px;top:203px;width:152px;height:24.5px;background:#f7f7f7;border-radius:3px"></div>
<span class="t" style="left:1757px;top:205.5px;font-size:12px;color:#8c8c8c;transform:scaleX(0.9183);">%</span>
<svg class="b" style="left:1887px;top:213px" width="10" height="7" viewBox="0 0 10 7"><path d="M0.5 0.5h9L5 6.5z" fill="#f0f0f0"/></svg>
<div class="b" style="left:1626px;top:232px;width:110px;height:24.5px;background:#f7f7f7;border-radius:3px"></div>
<span class="t" style="left:1631px;top:234.5px;font-size:12px;color:#9a9a9a;transform:scaleX(0.9201);">Fixed</span>
<svg class="b" style="left:1718px;top:242px" width="10" height="7" viewBox="0 0 10 7"><path d="M0.5 0.5h9L5 6.5z" fill="#f0f0f0"/></svg>
<svg class="b" style="left:1753px;top:236px" width="18" height="18" viewBox="0 0 18 18"><rect x="1" y="1" width="16" height="16" rx="2" fill="none" stroke="#0f5e93" stroke-width="2"/></svg>
<span class="t" style="left:1776px;top:234.5px;font-size:12px;color:#222;transform:scaleX(0.9300);">Save as fixed</span>
<div class="b" style="left:1486.5px;top:275.5px;width:20px;height:8px;background:#e3e3e3;border-radius:4px"></div>
<div class="b" style="left:1482.5px;top:273.5px;width:12px;height:12px;background:#bdbdbd;border-radius:50%"></div>
<span class="t" style="left:1517px;top:269.5px;font-size:12px;color:#222;transform:scaleX(1.0088);">Add Discount</span>
<div class="b" style="left:1626px;top:267px;width:110px;height:24.7px;background:#f7f7f7;border-radius:3px"></div>
<span class="t" style="left:1631px;top:269.5px;font-size:12px;color:#9a9a9a;transform:scaleX(0.9494);">Price Level A</span>
<svg class="b" style="left:1718px;top:277px" width="10" height="7" viewBox="0 0 10 7"><path d="M0.5 0.5h9L5 6.5z" fill="#f0f0f0"/></svg>
<div class="b" style="left:1752px;top:267px;width:152px;height:24.7px;background:#f7f7f7;border-radius:3px"></div>
<span class="t" style="left:1758px;top:269.5px;font-size:12px;color:#d0d0d0;transform:scaleX(0.9802);">Discount %</span>
<div class="b" style="left:1471px;top:302px;width:449px;height:1px;background:#e9e9e9;"></div>
<div class="b" style="left:1837px;top:327px;width:75px;height:25px;background:#055b93;border-radius:1px"></div>
<span class="t" style="left:1856.5px;top:329.5px;font-size:12px;color:#fff;transform:scaleX(0.7989);">DELETE</span>
<div class="b" style="left:1479px;top:362px;width:441px;height:621px;background:#fff;border:1px solid #dcdcdc;border-right:none;box-sizing:border-box"></div>
<div class="b" style="left:1480px;top:393px;width:440px;height:1px;background:#dcdcdc;"></div>
<div class="b" style="left:1480px;top:394px;width:440px;height:25px;background:#ecf3f7;"></div>
<div class="b" style="left:1480px;top:444px;width:440px;height:25px;background:#ecf3f7;"></div>
<div class="b" style="left:1504px;top:363px;width:1px;height:106px;background:rgba(120,140,160,0.2);"></div>
<div class="b" style="left:1642px;top:363px;width:1px;height:106px;background:rgba(120,140,160,0.2);"></div>
<span class="t" style="left:1510px;top:368.9px;font-size:12px;color:#222;transform:scaleX(0.9600);">Item</span>
<span class="t" style="left:1648px;top:368.9px;font-size:12px;color:#222;transform:scaleX(0.9895);">Description</span>
<svg class="b" style="left:1483px;top:397.7px" width="18" height="18" viewBox="0 0 18 18"><rect x="0" y="0" width="18" height="18" rx="2.5" fill="#0f5e93"/><path d="M3.6 9.2l3.6 3.7 7.3-8" fill="none" stroke="#fff" stroke-width="1.7"/></svg>
<span class="t" style="left:1510px;top:396.9px;font-size:12px;color:#222;transform:scaleX(0.8972);">0</span>
<span class="t" style="left:1648px;top:396.9px;font-size:12px;color:#222;transform:scaleX(0.9879);">qewr</span>
<svg class="b" style="left:1483px;top:422.7px" width="18" height="18" viewBox="0 0 18 18"><rect x="0" y="0" width="18" height="18" rx="2.5" fill="#0f5e93"/><path d="M3.6 9.2l3.6 3.7 7.3-8" fill="none" stroke="#fff" stroke-width="1.7"/></svg>
<span class="t" style="left:1510px;top:421.9px;font-size:12px;color:#222;transform:scaleX(0.8982);">00</span>
<svg class="b" style="left:1483px;top:447.7px" width="18" height="18" viewBox="0 0 18 18"><rect x="0" y="0" width="18" height="18" rx="2.5" fill="#0f5e93"/><path d="M3.6 9.2l3.6 3.7 7.3-8" fill="none" stroke="#fff" stroke-width="1.7"/></svg>
<span class="t" style="left:1510px;top:446.9px;font-size:12px;color:#222;transform:scaleX(0.8726);">0001</span>
<span class="t" style="left:1648px;top:446.9px;font-size:12px;color:#222;transform:scaleX(0.8951);">asds</span>
<div class="b" style="left:1752px;top:999px;width:75px;height:25px;background:#eeeeee;border-radius:1px"></div>
<span class="t" style="left:1767px;top:1001.5px;font-size:12px;color:#0f5e93;transform:scaleX(0.9037);">CANCEL</span>
<div class="b" style="left:1837px;top:999px;width:75px;height:25px;background:#055b93;border-radius:1px"></div>
<span class="t" style="left:1854.9px;top:1001.5px;font-size:12px;color:#fff;transform:scaleX(0.8730);">ASSIGN</span>
<div class="b" style="left:1457px;top:107px;width:455px;height:482px;border:4px solid #ff5b4b;border-right-width:4px;box-shadow:2px 2px 3px rgba(0,0,0,0.85), inset 2px 2px 3px rgba(0,0,0,0.85);"></div>
<div class="b" style="left:1916px;top:107px;width:4px;height:490px;background:#ff5b4b"></div>
</body></html>
